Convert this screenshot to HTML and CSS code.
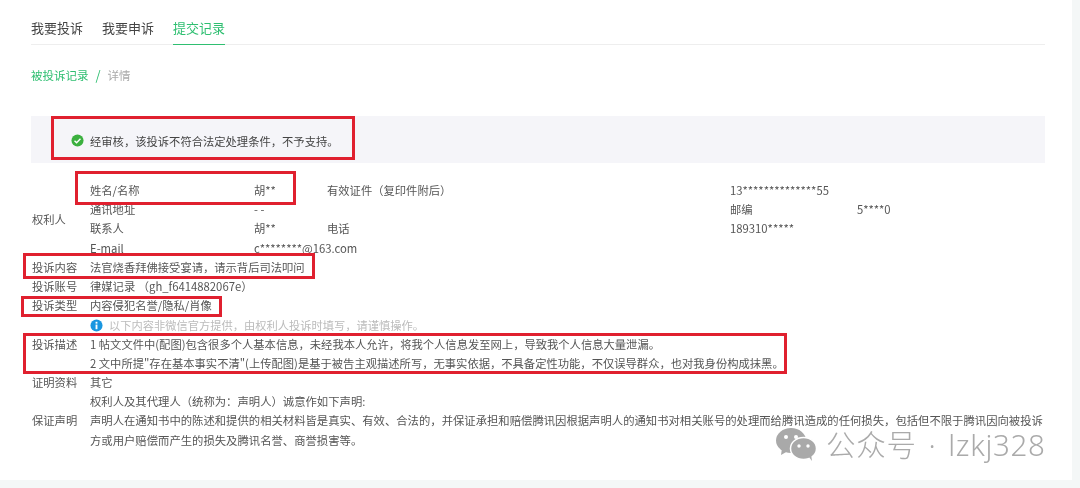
FILE: index.html
```html
<!DOCTYPE html>
<html lang="zh">
<head>
<meta charset="utf-8">
<title>提交记录</title>
<link rel="stylesheet" href="styles.css">
</head>
<body>
<main class="panel">
  <nav class="tabs">
    <span class="tab">我要投诉</span>
    <span class="tab">我要申诉</span>
    <span class="tab active">提交记录</span>
  </nav>
  <div class="crumbs"><span class="crumb-link">被投诉记录</span><span class="crumb-sep">/</span><span class="crumb-now">详情</span></div>
  <div class="notice">
    <svg class="check" viewBox="0 0 14 14"><circle cx="7" cy="7" r="6.5" fill="#3bb03f"/><path d="M3.8 7.2l2.2 2.2 4.2-4.3" fill="none" stroke="#fff" stroke-width="1.5"/></svg>
    <span>经审核，该投诉不符合法定处理条件，不予支持。</span>
  </div>
  <section class="details">
    <div class="label">权利人</div>
    <div class="owner">
      <span>姓名/名称</span><span>胡**</span><span>有效证件（复印件附后）</span><span>13**************55</span><span></span>
      <span>通讯地址</span><span>- -</span><span></span><span>邮编</span><span>5****0</span>
      <span>联系人</span><span>胡**</span><span>电话</span><span>189310*****</span><span></span>
      <span>E-mail</span><span>c********@163.com</span><span></span><span></span><span></span>
    </div>
    <div class="label">投诉内容</div><div>法官烧香拜佛接受宴请，请示背后司法叩问</div>
    <div class="label">投诉账号</div><div>律媒记录 （gh_f6414882067e）</div>
    <div class="label">投诉类型</div><div>内容侵犯名誉/隐私/肖像</div>
    <div></div>
    <div class="hint">
      <svg class="info" viewBox="0 0 14 14"><circle cx="7" cy="7" r="6.5" fill="#1a96e0"/><rect x="6" y="6" width="2" height="5" fill="#fff"/><rect x="6" y="3" width="2" height="2" fill="#fff"/></svg>
      <span>以下内容非微信官方提供，由权利人投诉时填写，请谨慎操作。</span>
    </div>
    <div class="label top">投诉描述</div>
    <div>1 帖文文件中(配图)包含很多个人基本信息，未经我本人允许，将我个人信息发至网上，导致我个人信息大量泄漏。<br>2 文中所提"存在基本事实不清"(上传配图)是基于被告主观描述所写，无事实依据，不具备定性功能，不仅误导群众，也对我身份构成抹黑。</div>
    <div class="label">证明资料</div><div>其它</div>
    <div class="label">保证声明</div>
    <div class="statement">权利人及其代理人（统称为：声明人）诚意作如下声明:<br>声明人在通知书中的陈述和提供的相关材料皆是真实、有效、合法的，并保证承担和赔偿腾讯因根据声明人的通知书对相关账号的处理而给腾讯造成的任何损失，包括但不限于腾讯因向被投诉<br>方或用户赔偿而产生的损失及腾讯名誉、商誉损害等。</div>
  </section>
  <div class="mark mark-notice"></div>
  <div class="mark mark-name"></div>
  <div class="mark mark-content"></div>
  <div class="mark mark-type"></div>
  <div class="mark mark-desc"></div>
  <div class="watermark">
    <svg class="wechat" viewBox="0 0 40 33"><ellipse cx="15" cy="12.5" rx="15" ry="12.5" fill="#a9a9a9"/><path d="M6 20l-1 7 7-4z" fill="#a9a9a9"/><ellipse cx="27.5" cy="20.5" rx="13" ry="11" fill="#a9a9a9" stroke="#fff" stroke-width="1.5"/><path d="M33 29l3 4-1-7z" fill="#a9a9a9"/><circle cx="10" cy="9" r="2" fill="#fff"/><circle cx="20" cy="9" r="2" fill="#fff"/><circle cx="23" cy="18" r="1.7" fill="#fff"/><circle cx="32" cy="18" r="1.7" fill="#fff"/></svg>
    <span>公众号 · lzkj328</span>
  </div>
</main>
</body>
</html>
```
FILE: styles.css
```css
* { box-sizing: border-box; }
html, body { margin: 0; height: 100%; }
body {
  background: #f4f7f7;
  font-family: "Noto Sans CJK SC", "Noto Sans", sans-serif;
  color: #555;
  font-size: 11.3px;
  overflow: hidden;
  text-spacing-trim: space-all;
}
.panel {
  position: relative;
  width: 1072px;
  height: 480px;
  background: #fff;
  padding: 18px 27px 0 31px;
  filter: blur(0.4px);
}
.tabs {
  display: flex;
  gap: 19px;
  height: 27px;
  border-bottom: 1px solid #eee;
}
.tab {
  font-size: 13px;
  line-height: 20px;
  height: 27px;
  color: #444;
}
.tab.active {
  color: #2fbf71;
  border-bottom: 1px solid #2fbf71;
}
.crumbs {
  margin-top: 21px;
  display: flex;
  align-items: center;
  line-height: 18px;
  font-size: 11.5px;
}
.crumb-link { color: #2fbf71; }
.crumb-sep { color: #2fbf71; margin: 0 7px; font-size: 13px; }
.crumb-now { color: #aaa; }
.notice {
  margin-top: 32px;
  height: 47px;
  background: #f5f5f9;
  display: flex;
  align-items: center;
  gap: 6px;
  padding: 2px 0 0 40px;
  color: #444;
}
.check { width: 13px; height: 13px; }
.details {
  margin-top: 18px;
  display: grid;
  grid-template-columns: 59px 1fr;
  line-height: 19.2px;
}
.label { align-self: center; padding-left: 1px; }
.label.top { align-self: start; }
.statement { white-space: nowrap; font-size: 11.35px; }
.owner {
  display: grid;
  grid-template-columns: 164px 73px 403px 127px 1fr;
}
.owner > span { height: 19.2px; }
.hint {
  display: flex;
  align-items: center;
  gap: 6px;
  height: 19.2px;
  padding-top: 2px;
  color: #bbb;
  font-size: 11.25px;
}
.info { width: 13px; height: 13px; }
.mark {
  position: absolute;
  border: 3px solid #e0202f;
}
.mark-notice { left: 51px; top: 116px; width: 304px; height: 44px; }
.mark-name { left: 75px; top: 171px; width: 221px; height: 34px; }
.mark-content { left: 23px; top: 253px; width: 292px; height: 26px; }
.mark-type { left: 21px; top: 296px; width: 201px; height: 21px; }
.mark-desc { left: 23px; top: 333px; width: 764px; height: 41px; }
.watermark {
  position: absolute;
  left: 776px;
  top: 428px;
  display: flex;
  align-items: center;
  gap: 10px;
  font-family: "Noto Sans", "Noto Sans CJK SC", sans-serif;
  font-size: 29.5px;
  font-weight: 300;
  line-height: 32px;
  color: #aaa;
  letter-spacing: 0.7px;
  word-spacing: 3.5px;
}
.wechat { width: 40px; height: 33px; }
```
